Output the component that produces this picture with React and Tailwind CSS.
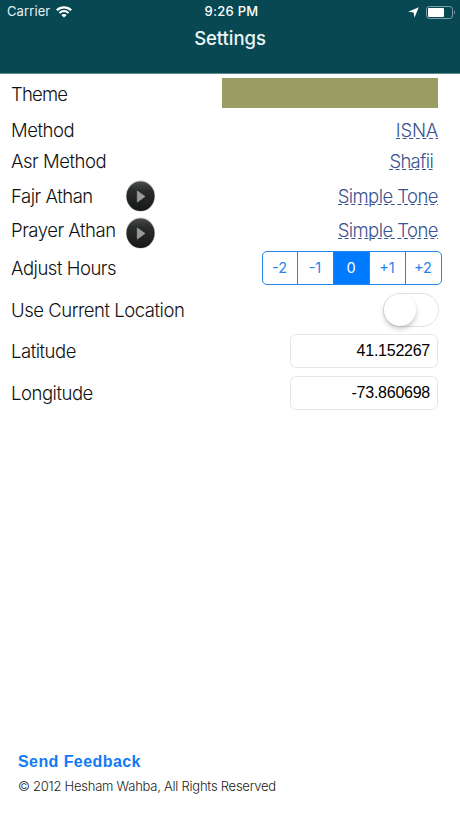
import React, { useState } from 'react';

const WifiIcon = () => (
  <svg className="w-[16px] h-[12px]" viewBox="0 0 16 12" fill="none" stroke="#fff">
    <path d="M0.8 4.2C4.8 0.4 11.2 0.4 15.2 4.2" strokeWidth="2.2" />
    <path d="M3.4 6.9C6.1 4.5 9.9 4.5 12.6 6.9" strokeWidth="2" />
    <path d="M8 11.6L5.3 9C6.9 7.6 9.1 7.6 10.7 9Z" fill="#fff" stroke="none" />
  </svg>
);

const BatteryIcon = () => (
  <svg className="w-[30px] h-[13px]" viewBox="0 0 30 13" fill="none">
    <rect x="0.5" y="0.5" width="26" height="12" rx="2.8" stroke="#7fa0a6" />
    <rect x="2" y="2" width="16" height="9" rx="1" fill="#fff" />
    <path d="M28 4.5C29.3 5 29.3 8 28 8.5Z" fill="#7fa0a6" />
  </svg>
);

const PlayButton = ({ className }) => (
  <button type="button" className={`absolute left-[125px] ${className}`}>
    <svg className="w-[31px] h-[32px] block" viewBox="0 0 31 32">
      <defs>
        <linearGradient id="knob" x1="0" y1="0" x2="0" y2="1">
          <stop offset="0" stopColor="#4a4c4c" />
          <stop offset="0.3" stopColor="#2b2d2d" />
          <stop offset="1" stopColor="#161818" />
        </linearGradient>
      </defs>
      <ellipse cx="15.5" cy="16" rx="14.6" ry="15.4" fill="#8d8f8f" opacity="0.55" />
      <ellipse cx="15.5" cy="16.2" rx="14" ry="14.8" fill="url(#knob)" />
      <path d="M12.3 11L20 16.5L12.3 22Z" fill="#9a9a9a" stroke="#9a9a9a" strokeWidth="0.8" strokeLinejoin="round" />
    </svg>
  </button>
);

const Row = ({ label, className, labelClass = 'tracking-[-0.47px]', children }) => (
  <div className={`relative flex items-center justify-between pl-[11px] ${className}`}>
    <span className={`text-[18.5px] leading-[22px] font-light whitespace-nowrap text-[#111] ${labelClass}`}>{label}</span>
    {children}
  </div>
);

const Choice = ({ value, className }) => (
  <a className={`relative block text-[18.5px] leading-[22px] font-light whitespace-nowrap text-[#3b5390] ${className}`}>
    {value}
    <svg className="absolute left-0 bottom-[2px] w-full h-px">
      <line x1="0" y1="0.5" x2="100%" y2="0.5" stroke="#3b5390" strokeDasharray="4 2.6" />
    </svg>
  </a>
);

const Coordinate = ({ value }) => (
  <input
    readOnly
    value={value}
    className="w-[148px] h-[34px] mr-[22px] pr-[7px] rounded-[6px] border border-[#e6e6e6] bg-white text-right font-['Liberation_Sans'] text-[16px] tracking-[-0.25px] text-black outline-none"
  />
);

const App = () => {
  const [hours, setHours] = useState('0');

  return (
    <div className="w-full h-screen flex flex-col bg-white font-['Inter',sans-serif] overflow-hidden">
      <header className="h-[74px] bg-[#084853] text-white border-b border-[#5f8990] shrink-0">
        <div className="grid grid-cols-3 items-center h-[24px] px-[7px]">
          <div className="flex items-center gap-[6px] text-[13px]">
            <span className="tracking-[0.1px] text-[#e4f0f2]">Carrier</span>
            <WifiIcon />
          </div>
          <span className="text-center text-[13px] font-medium tracking-[0.3px] pl-[3px]">9:26 PM</span>
          <div className="flex items-center justify-end gap-[7px] -mr-[3px]">
            <svg className="w-[11px] h-[11px]" viewBox="0 0 11 11">
              <path d="M10.8 0.2L6.4 10.8L5.6 5.4L0.2 4.8Z" fill="#fff" />
            </svg>
            <BatteryIcon />
          </div>
        </div>
        <h1 className="text-center text-[18.5px] leading-[28px] font-medium tracking-[-0.05px] text-[#eaf6f8]">Settings</h1>
      </header>

      <main className="flex flex-col">
        <Row label="Theme" className="h-[42px]" labelClass="tracking-[-0.8px] mb-[2px]">
          <div className="w-[216px] h-[30px] mr-[22px] mb-[4px] bg-[#999c63]" />
        </Row>
        <Row label="Method" className="h-[28px]">
          <Choice value="ISNA" className="mr-[22px] tracking-[-0.2px]" />
        </Row>
        <Row label="Asr Method" className="h-[34px]">
          <Choice value="Shafii" className="mr-[27px] tracking-[-0.7px]" />
        </Row>
        <Row label="Fajr Athan" className="h-[36px]">
          <PlayButton className="top-[2px]" />
          <Choice value="Simple Tone" className="mr-[22px] tracking-[-0.55px]" />
        </Row>
        <Row label="Prayer Athan" className="h-[34px]" labelClass="tracking-[-0.47px] mb-[2px]">
          <PlayButton className="top-[3px]" />
          <Choice value="Simple Tone" className="mr-[22px] mb-[2px] tracking-[-0.55px]" />
        </Row>
        <Row label="Adjust Hours" className="h-[40px]">
          <div className="flex w-[180px] h-[34px] mr-[18px] rounded-[5px] border border-[#2583f0] overflow-hidden divide-x divide-[#2583f0]">
            {['-2', '-1', '0', '+1', '+2'].map((h) => (
              <button
                key={h}
                type="button"
                onClick={() => setHours(h)}
                className={`flex-1 first:flex-none first:w-[35px] pr-[1px] text-[14.5px] ${h === hours ? 'bg-[#007aff] text-white' : 'text-[#2583f0]'}`}
              >
                {h}
              </button>
            ))}
          </div>
        </Row>
        <Row label="Use Current Location" className="h-[44px]">
          <div className="w-[56px] h-[34px] mr-[21px] rounded-full border-[1.5px] border-[#e2e2e2]">
            <div className="w-[32px] h-[32px] rounded-full bg-white shadow-[0_3px_5px_rgba(0,0,0,0.22)]" />
          </div>
        </Row>
        <Row label="Latitude" className="h-[38px]">
          <Coordinate value="41.152267" />
        </Row>
        <Row label="Longitude" className="h-[46px]">
          <Coordinate value="-73.860698" />
        </Row>
      </main>

      <footer className="mt-auto pl-[18px] h-[68px]">
        <a className="block font-['Liberation_Sans'] font-bold text-[16px] tracking-[0.42px] leading-[24px] text-[#127af5]">Send Feedback</a>
        <p className="text-[13px] leading-[24px] font-light tracking-[-0.24px] text-[#222]">© 2012 Hesham Wahba, All Rights Reserved</p>
      </footer>
    </div>
  );
};

export default App;
